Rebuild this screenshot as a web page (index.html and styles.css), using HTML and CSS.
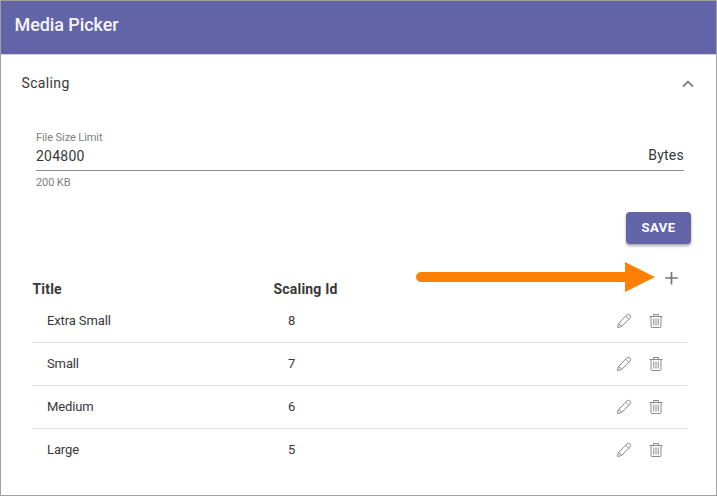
FILE: index.html
```html
<!DOCTYPE html>
<html lang="en">
<head>
<meta charset="utf-8">
<title>Media Picker</title>
<link rel="stylesheet" href="styles.css">
</head>
<body>
<svg class="sprite" width="0" height="0" aria-hidden="true">
  <symbol id="pencil" viewBox="0 0 16 16">
    <path d="M1.5 14.5 2.4 10.7 10.6 2.1Q12.4.5 14 2 15.6 3.6 13.9 5.3L5.4 13.6ZM2.4 10.7Q4.8 11 5.4 13.6M9.6 3.1 12.9 6.4"/>
  </symbol>
  <symbol id="trash" viewBox="0 0 14 16">
    <path d="M.5 3.5H13.5M4.5 3.5V1.5H9.5V3.5M2 3.5V13.5Q2 14.5 3 14.5H11Q12 14.5 12 13.5V3.5M4.75 5.5V12.5M7 5.5V12.5M9.25 5.5V12.5"/>
  </symbol>
</svg>
<main class="dialog">
  <header class="header"><h1>Media Picker</h1></header>
  <section class="panel">
    <div class="panel-head">
      <h2>Scaling</h2>
      <svg class="chevron" viewBox="0 0 12 8"><path d="M1 6.7 6 1.7 11 6.7"/></svg>
    </div>
    <div class="field">
      <label for="limit">File Size Limit</label>
      <div class="control"><span id="limit">204800</span><span class="unit">Bytes</span></div>
      <div class="helper">200 KB</div>
    </div>
    <div class="actions"><button class="save">SAVE</button></div>
    <div class="add">
      <svg class="arrow" viewBox="0 0 240 30"><path class="shaft" d="M6 15H212"/><path class="tip" d="M210 0 240 15 210 30Z"/></svg>
      <svg class="plus" viewBox="0 0 14 14"><path d="M7.5 1V13.4M1.2 7H13.8"/></svg>
    </div>
    <div class="table">
      <div class="thead"><span>Title</span><span>Scaling Id</span></div>
      <div class="row"><span>Extra Small</span><span>8</span><span class="tools"><svg class="pencil"><use href="#pencil"/></svg><svg class="trash"><use href="#trash"/></svg></span></div>
      <div class="row"><span>Small</span><span>7</span><span class="tools"><svg class="pencil"><use href="#pencil"/></svg><svg class="trash"><use href="#trash"/></svg></span></div>
      <div class="row"><span>Medium</span><span>6</span><span class="tools"><svg class="pencil"><use href="#pencil"/></svg><svg class="trash"><use href="#trash"/></svg></span></div>
      <div class="row"><span>Large</span><span>5</span><span class="tools"><svg class="pencil"><use href="#pencil"/></svg><svg class="trash"><use href="#trash"/></svg></span></div>
    </div>
  </section>
</main>
</body>
</html>
```
FILE: styles.css
```css
* { box-sizing: border-box; }
body { margin: 0; font-family: Roboto, sans-serif; color: #383838; background: #fff; }
h1, h2 { margin: 0; }
svg { display: block; fill: none; stroke: #777; }
.sprite { position: absolute; }
.dialog { height: 496px; border: 1px solid #a0a0a0; overflow: hidden; }
.header { height: 54px; padding: 12px 13.5px; background: #6264a7; border-bottom: 1px solid #d2d2dc; }
.header h1 { font-size: 18px; line-height: 24px; font-weight: 500; letter-spacing: -.08px; color: #f5f5fb; }
.panel-head { display: flex; justify-content: space-between; align-items: center; height: 58px; padding: 0 23px 0 20.5px; }
.panel-head h2 { font-size: 14px; font-weight: 400; line-height: 20px; letter-spacing: .35px; padding-bottom: 2px; }
.chevron { width: 12px; height: 8px; stroke-width: 1.7; position: relative; left: .5px; }
.field { margin: 17px 32px 0 35px; }
.field label { display: block; font-size: 11px; line-height: 16px; letter-spacing: -.08px; color: #808080; }
.control { display: flex; justify-content: space-between; height: 25px; border-bottom: 1px solid #8c8c8c; font-size: 14px; line-height: 20px; letter-spacing: .25px; }
.unit { position: relative; top: -1px; }
.helper { font-size: 11px; line-height: 16px; margin-top: 4px; letter-spacing: -.1px; color: #808080; }
.actions { display: flex; justify-content: flex-end; padding: 21px 25px 0 0; }
.save { width: 65px; height: 32px; padding: 0; border: 0; border-radius: 4px; background: #6264a7; color: #fff; font: 700 13px/32px Roboto, sans-serif; letter-spacing: .5px; box-shadow: 0 2px 3px rgba(0, 0, 0, .35); }
.add { display: flex; justify-content: flex-end; align-items: center; height: 30px; margin-top: 18px; padding-right: 38px; }
.arrow { width: 240px; height: 30px; margin-right: 9px; }
.arrow .shaft { stroke: #ff8000; stroke-width: 10; stroke-linecap: round; }
.arrow .tip { fill: #ff8000; stroke: none; }
.plus { width: 14px; height: 14px; stroke-width: 1.7; margin-top: 2px; }
.table { margin: -14px 29px 0 31px; }
.thead, .row { display: grid; grid-template-columns: 241px 1fr auto; align-items: center; }
.thead { height: 22px; padding-left: .5px; font-size: 14px; font-weight: 700; letter-spacing: .2px; }
.row { height: 43px; padding: 0 24px 1px 15px; border-bottom: 1px solid #e0e0e0; font-size: 13px; letter-spacing: -.12px; }
.row:last-child { border-color: transparent; }
.tools { display: flex; align-items: center; gap: 17px; }
.pencil { width: 16px; height: 16px; stroke: #8c8c8c; }
.trash { width: 14px; height: 16px; stroke: #8c8c8c; }
```
